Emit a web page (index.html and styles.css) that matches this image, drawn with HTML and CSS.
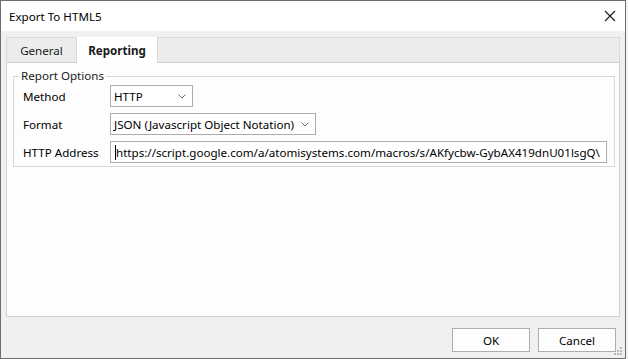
FILE: index.html
```html
<!DOCTYPE html>
<html lang="en">
<head>
  <meta charset="UTF-8" />
  <title>Export To HTML5</title>
  <link rel="stylesheet" href="styles.css">
</head>
<body>
  <div class="window">
    <div class="titlebar">
      <div class="title">Export To HTML5</div>
      <svg class="close" width="12" height="12" viewBox="0 0 12 12">
        <path d="M1 1 L11 11 M11 1 L1 11" stroke="#1a1a1a" stroke-width="1.1" fill="none"/>
      </svg>
    </div>

    <div class="content">
      <div class="tabs">
        <div class="tab">General</div>
        <div class="tab active">Reporting</div>
      </div>

      <div class="panel">
        <fieldset class="group">
          <legend>Report Options</legend>

          <div class="row">
            <div class="label">Method</div>
            <div class="combo combo-method">
              <span>HTTP</span>
              <svg width="8" height="5" viewBox="0 0 8 5"><path d="M0.5 0.5 L4 4 L7.5 0.5" stroke="#707070" fill="none"/></svg>
            </div>
          </div>

          <div class="row">
            <div class="label">Format</div>
            <div class="combo combo-format">
              <span>JSON (Javascript Object Notation)</span>
              <svg width="8" height="5" viewBox="0 0 8 5"><path d="M0.5 0.5 L4 4 L7.5 0.5" stroke="#707070" fill="none"/></svg>
            </div>
          </div>

          <div class="row">
            <div class="label">HTTP Address</div>
            <div class="textbox"><span class="caret"></span>https://script.google.com/a/atomisystems.com/macros/s/AKfycbw-GybAX419dnU01lsgQ\</div>
          </div>
        </fieldset>
      </div>

      <div class="footer">
        <div class="btn">OK</div>
        <div class="btn">Cancel</div>
      </div>
    </div>

    <svg class="grip" width="9" height="9" viewBox="0 0 9 9">
      <rect x="6" y="0" width="2" height="2" fill="#b8b8b8"/>
      <rect x="3" y="3" width="2" height="2" fill="#b8b8b8"/>
      <rect x="6" y="3" width="2" height="2" fill="#b8b8b8"/>
      <rect x="0" y="6" width="2" height="2" fill="#b8b8b8"/>
      <rect x="3" y="6" width="2" height="2" fill="#b8b8b8"/>
      <rect x="6" y="6" width="2" height="2" fill="#b8b8b8"/>
    </svg>
  </div>
</body>
</html>
```

FILE: styles.css
```css
body {
  margin: 0;
  background-color: #f4f4f4;
  font-family: "Noto Sans", "Open Sans", sans-serif;
  font-size: 11.6px;
  color: #000;
}

.window {
  position: relative;
  width: 626px;
  height: 359px;
  box-sizing: border-box;
  border: 1px solid #6e6e6e;
  background-color: #f0f0f0;
  display: flex;
  flex-direction: column;
}

.titlebar {
  height: 30px;
  background-color: #fff;
  display: flex;
  align-items: center;
  justify-content: space-between;
  padding: 0 9px 0 8px;
}

.content {
  flex: 1;
  display: flex;
  flex-direction: column;
  padding: 6px 5px 0 5px;
}

/* Вкладки */
.tabs {
  height: 24px;
  display: flex;
  border: 1px solid #d9d9d9;
  border-bottom: none;
  background-color: #ececec;
  position: relative;
  z-index: 1;
}

.tab {
  width: 69px;
  display: flex;
  align-items: center;
  justify-content: center;
  border-right: 1px solid #d9d9d9;
  color: #1a1a1a;
}

.tab.active {
  width: 80px;
  margin-top: -1px;
  margin-bottom: -1px;
  background-color: #fff;
  font-weight: bold;
}

.panel {
  height: 255px;
  box-sizing: border-box;
  border: 1px solid #d0d0d0;
  background-color: #fdfdfd;
  padding: 6px 6px 0 6px;
}

.group {
  margin: 0;
  padding: 2px 7px 3px 9px;
  border: 1px solid #d8d8d8;
  display: flex;
  flex-direction: column;
  gap: 6px;
}

.group legend {
  padding: 0 2px;
  margin-left: -4px;
  line-height: 14px;
  color: #1a1a1a;
}

.row {
  display: flex;
  align-items: center;
}

.label {
  width: 87px;
}

.combo, .textbox {
  height: 22px;
  box-sizing: border-box;
  border: 1px solid #acacac;
  background-color: #fff;
  display: flex;
  align-items: center;
  padding: 0 6px 0 3px;
}

.combo {
  justify-content: space-between;
}

.combo-method {
  width: 83px;
}

.combo-format {
  width: 206px;
}

.textbox {
  flex: 1;
  padding-left: 4px;
  white-space: nowrap;
  overflow: hidden;
}

.caret {
  width: 1px;
  height: 15px;
  background-color: #000;
}

.footer {
  display: flex;
  justify-content: flex-end;
  gap: 8px;
  padding: 11px 4px 0 0;
}

.btn {
  width: 78px;
  height: 24px;
  box-sizing: border-box;
  border: 1px solid #adadad;
  background-color: #fdfdfd;
  display: flex;
  align-items: center;
  justify-content: center;
}

.grip {
  position: absolute;
  right: 2px;
  bottom: 2px;
}
```
